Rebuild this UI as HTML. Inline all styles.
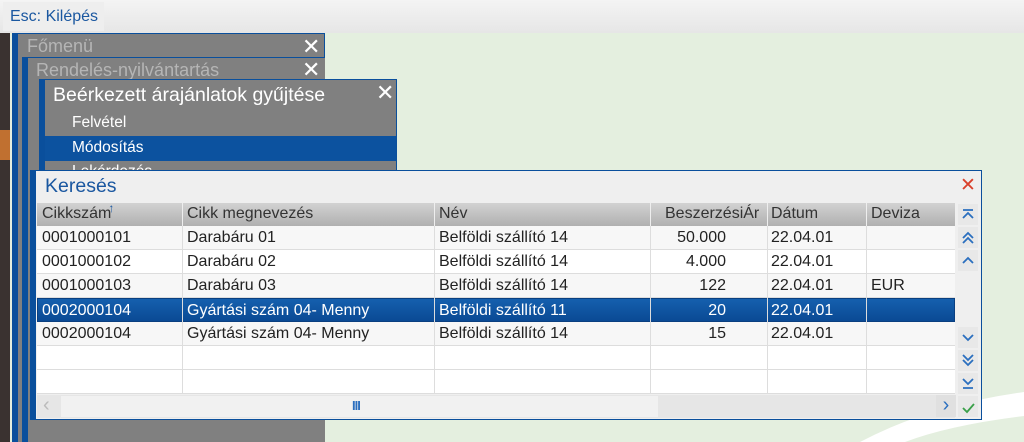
<!DOCTYPE html>
<html><head><meta charset="utf-8"><style>
*{margin:0;padding:0;box-sizing:border-box}
html,body{width:1024px;height:442px;overflow:hidden}
body{background:#e4efdf;font-family:"Liberation Sans",Arial,sans-serif;position:relative}
.a{position:absolute}
.x{position:absolute;color:#fff;font-size:22px;line-height:20px}
.row{position:absolute;left:37px;width:918px;height:24px;font-size:16px;color:#222;border-bottom:1px solid #ddd}
.row span{position:absolute;top:3px}
.c{position:absolute;top:0;bottom:0;width:1px;background:#ddd}
</style></head><body>
<svg class="a" style="left:0;top:0" width="1024" height="442"><path d="M860 442Q930 405 1024 392L1024 416Q950 425 905 442Z" fill="#fff"/></svg>
<div class="a" style="left:0;top:0;width:10px;height:442px;background:#3a3230"></div>
<div class="a" style="left:0;top:130px;width:10px;height:30px;background:#c07030"></div>
<div class="a" style="left:0;top:0;width:1024px;height:33px;background:linear-gradient(#f4f4f4,#e6e6e6)"></div>
<div class="a" style="left:3px;top:2px;width:101px;height:29px;background:#eeeeee;color:#1a57a0;font-size:16px;padding:6px 0 0 7px">Esc: Kilépés</div>

<div class="a" style="left:12px;top:33px;width:313px;height:409px;background:#808080;border-top:1px solid #0a4f9c;border-right:1px solid #0a4f9c;border-left:6px solid #0a4f9c"></div>
<div class="a" style="left:27px;top:36px;color:#b5b5b5;font-size:18px">Főmenü</div>
<div class="x" style="left:302px;top:37px">✕</div>
<div class="a" style="left:22px;top:57px;width:303px;height:385px;background:#808080;border-top:1px solid #0a4f9c;border-left:6px solid #0a4f9c"></div>
<div class="a" style="left:36px;top:60px;color:#b5b5b5;font-size:18px">Rendelés-nyilvántartás</div>
<div class="x" style="left:302px;top:60px">✕</div>
<div class="a" style="left:39px;top:79px;width:358px;height:100px;background:#808080;border:1px solid #0a4f9c;border-left:6px solid #0a4f9c"></div>
<div class="a" style="left:53px;top:84px;color:#fff;font-size:19.5px">Beérkezett árajánlatok gyűjtése</div>
<div class="x" style="left:376px;top:83px">✕</div>
<div class="a" style="left:72px;top:114px;color:#fff;font-size:15.5px">Felvétel</div>
<div class="a" style="left:45px;top:136px;width:351px;height:25px;background:#0c529f"></div>
<div class="a" style="left:72px;top:139px;color:#fff;font-size:15.5px">Módosítás</div>
<div class="a" style="left:72px;top:163px;color:#fff;font-size:15.5px">Lekérdezés</div>

<div class="a" style="left:30px;top:170px;width:952px;height:250px;background:#efefef;border:1px solid #0a4f9c;border-left:6px solid #0a4f9c"></div>
<div class="a" style="left:45px;top:175px;color:#1a57a0;font-size:19.5px">Keresés</div>
<div class="a" style="left:960px;top:174px;color:#d9402b;font-size:19px">✕</div>
<div class="a" style="left:37px;top:203px;width:918px;height:23px;background:linear-gradient(#d2d2d2,#b0b0b0);font-size:16px;color:#333">
<span class="a" style="left:5px;top:2px">Cikkszám<span style="color:#1a57a0;font-size:12px;position:relative;top:-6px;left:-3px">↑</span></span>
<span class="a" style="left:150px;top:2px">Cikk megnevezés</span>
<span class="a" style="left:402px;top:2px">Név</span>
<span class="a" style="left:628px;top:2px">BeszerzésiÁr</span>
<span class="a" style="left:734px;top:2px">Dátum</span>
<span class="a" style="left:834px;top:2px">Deviza</span>
<div class="c" style="left:145px;background:#eee"></div><div class="c" style="left:397px;background:#eee"></div><div class="c" style="left:613px;background:#eee"></div><div class="c" style="left:730px;background:#eee"></div><div class="c" style="left:829px;background:#eee"></div>
</div>
<div class="a" style="left:37px;top:226px;width:918px;height:168px;background:#fff"></div>

<div class="row" style="top:226px;background:#f7f7f7"><span style="left:5px">0001000101</span><span style="left:150px">Darabáru 01</span><span style="left:402px">Belföldi szállító 14</span><span style="left:611px;width:78px;text-align:right">50.000</span><span style="left:734px">22.04.01</span></div>
<div class="row" style="top:250px"><span style="left:5px">0001000102</span><span style="left:150px">Darabáru 02</span><span style="left:402px">Belföldi szállító 14</span><span style="left:611px;width:78px;text-align:right">4.000</span><span style="left:734px">22.04.01</span></div>
<div class="row" style="top:274px;background:#f7f7f7"><span style="left:5px">0001000103</span><span style="left:150px">Darabáru 03</span><span style="left:402px">Belföldi szállító 14</span><span style="left:611px;width:78px;text-align:right">122</span><span style="left:734px">22.04.01</span><span style="left:834px">EUR</span></div>
<div class="row" style="top:298px;background:linear-gradient(#1560ae,#0a4a94);color:#fff;border:1px solid #0a3f80"><span style="left:4px">0002000104</span><span style="left:149px">Gyártási szám 04- Menny</span><span style="left:401px">Belföldi szállító 11</span><span style="left:610px;width:78px;text-align:right">20</span><span style="left:733px">22.04.01</span></div>
<div class="row" style="top:322px;background:#f7f7f7"><span style="left:5px">0002000104</span><span style="left:150px">Gyártási szám 04- Menny</span><span style="left:402px">Belföldi szállító 14</span><span style="left:611px;width:78px;text-align:right">15</span><span style="left:734px">22.04.01</span></div>
<div class="row" style="top:346px"></div>
<div class="row" style="top:370px"></div>
<div class="a" style="left:37px;top:226px;width:918px;height:168px">
<div class="c" style="left:145px"></div><div class="c" style="left:397px"></div><div class="c" style="left:613px"></div><div class="c" style="left:730px"></div><div class="c" style="left:829px"></div></div>

<div class="a" style="left:37px;top:395px;width:918px;height:23px;background:#e6e6e6"></div>
<div class="a" style="left:61px;top:396px;width:597px;height:21px;background:#f1f1f1"></div>
<div class="a" style="left:43px;top:394px;color:#bbb;font-size:20px;line-height:22px">‹</div>
<div class="a" style="left:352px;top:398px;color:#2b6fbf;font-size:13px;font-weight:bold;letter-spacing:-1px;line-height:16px">III</div>
<div class="a" style="left:936px;top:395px;width:20px;height:22px;background:#e0e0e0;color:#2b6fbf;font-size:20px;text-align:center;line-height:20px">›</div>

<svg class="a" style="left:958px;top:204px" width="20" height="214" fill="none" stroke="#2b6fbf" stroke-width="1.8">
<rect x="0" y="0" width="20" height="21" fill="#e8e8e8" stroke="none"/>
<rect x="0" y="23" width="20" height="21" fill="#e8e8e8" stroke="none"/>
<rect x="0" y="46" width="20" height="21" fill="#e8e8e8" stroke="none"/>
<rect x="0" y="123" width="20" height="21" fill="#e8e8e8" stroke="none"/>
<rect x="0" y="146" width="20" height="21" fill="#e8e8e8" stroke="none"/>
<rect x="0" y="169" width="20" height="21" fill="#e8e8e8" stroke="none"/>
<rect x="0" y="192" width="20" height="21" fill="#e8e8e8" stroke="none"/>
<path d="M5 6h10M5 14l5-5 5 5"/>
<path d="M5 34l5-5 5 5M5 39l5-5 5 5"/>
<path d="M5 59l5-5 5 5"/>
<path d="M5 131l5 5 5-5"/>
<path d="M5 151l5 5 5-5M5 156l5 5 5-5"/>
<path d="M5 175l5 5 5-5M5 184h10"/>
<path d="M5 204l4 4 7-8" stroke="#3aa04a"/>
</svg>
</body></html>
